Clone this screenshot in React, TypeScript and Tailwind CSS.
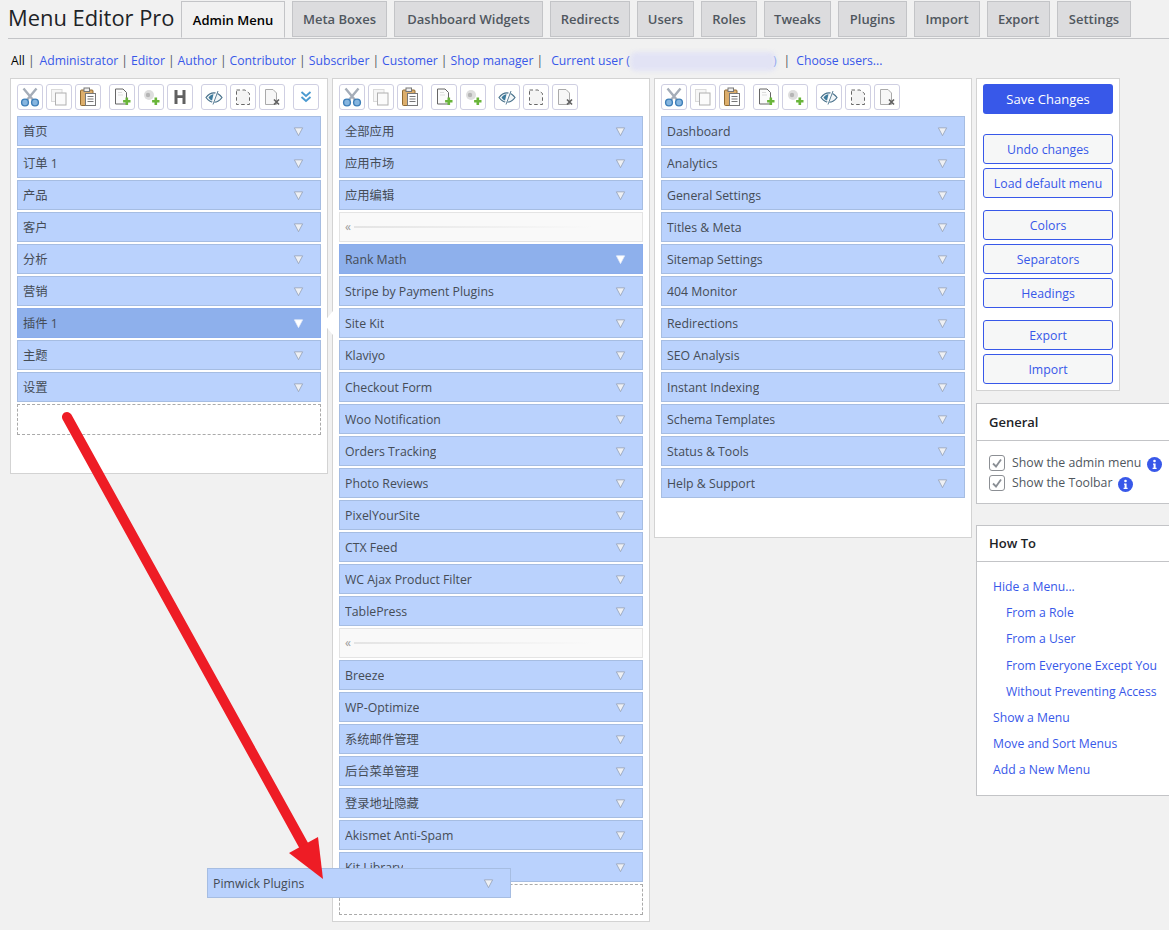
import React from 'react';

const font = "font-['Open_Sans','Noto_Sans_CJK_SC',sans-serif]";

const tabs = [
  { label: 'Admin Menu', w: 'w-[104px]', active: true },
  { label: 'Meta Boxes', w: 'w-[95px]' },
  { label: 'Dashboard Widgets', w: 'w-[149px]' },
  { label: 'Redirects', w: 'w-[80px]' },
  { label: 'Users', w: 'w-[57px]' },
  { label: 'Roles', w: 'w-[56px]' },
  { label: 'Tweaks', w: 'w-[67px]' },
  { label: 'Plugins', w: 'w-[69px]' },
  { label: 'Import', w: 'w-[66px]' },
  { label: 'Export', w: 'w-[63px]' },
  { label: 'Settings', w: 'w-[74px]' },
];

const roles = ['Administrator', 'Editor', 'Author', 'Contributor', 'Subscriber', 'Customer', 'Shop manager'];

const column1 = ['首页', '订单 1', '产品', '客户', '分析', '营销', '插件 1', '主题', '设置'];
const column2 = [
  '全部应用', '应用市场', '应用编辑', '-', 'Rank Math', 'Stripe by Payment Plugins', 'Site Kit', 'Klaviyo',
  'Checkout Form', 'Woo Notification', 'Orders Tracking', 'Photo Reviews', 'PixelYourSite', 'CTX Feed',
  'WC Ajax Product Filter', 'TablePress', '-', 'Breeze', 'WP-Optimize', '系统邮件管理', '后台菜单管理',
  '登录地址隐藏', 'Akismet Anti-Spam', 'Kit Library',
];
const column3 = [
  'Dashboard', 'Analytics', 'General Settings', 'Titles & Meta', 'Sitemap Settings', '404 Monitor', 'Redirections',
  'SEO Analysis', 'Instant Indexing', 'Schema Templates', 'Status & Tools', 'Help & Support',
];

const howTo = [
  { label: 'Hide a Menu...', sub: false },
  { label: 'From a Role', sub: true },
  { label: 'From a User', sub: true },
  { label: 'From Everyone Except You', sub: true },
  { label: 'Without Preventing Access', sub: true },
  { label: 'Show a Menu', sub: false },
  { label: 'Move and Sort Menus', sub: false },
  { label: 'Add a New Menu', sub: false },
];

const GreenPlus = () => (
  <path d="M13.500 10.500h2.600v2.400h2.400v2.600h-2.400v2.400h-2.600v-2.400h-2.400v-2.600h2.400z" fill="#69b53a" />
);

const icons: Record<string, React.ReactNode> = {
  cut: (
    <>
      <path d="M3.500 1.500l10 12M16.500 1.500l-10 12" stroke="#a5adb8" strokeWidth="2.400" fill="none" />
      <circle cx="5" cy="15.500" r="3.400" fill="#86b6e0" stroke="#3f7fb8" strokeWidth="1.400" />
      <circle cx="15" cy="15.500" r="3.400" fill="#86b6e0" stroke="#3f7fb8" strokeWidth="1.400" />
    </>
  ),
  copy: (
    <>
      <rect x="2.500" y="2.500" width="10.500" height="12" fill="#f6f6f6" stroke="#dadada" />
      <rect x="6.500" y="6" width="10.500" height="12" fill="#fbfbfb" stroke="#b0b0b0" />
    </>
  ),
  paste: (
    <>
      <rect x="2.500" y="3" width="12.500" height="15.500" rx="1" fill="#dcae6c" stroke="#8f6a32" />
      <rect x="6" y="1" width="5.500" height="3.500" fill="#eee" stroke="#777" />
      <rect x="7.500" y="6.500" width="10" height="12" fill="#fdfdfd" stroke="#777" />
      <path d="M9.500 9.500h6M9.500 12h6M9.500 14.500h6" stroke="#777" />
    </>
  ),
  add: (
    <>
      <path d="M3.500 2h7.500l3.500 3.500V17h-11z" fill="#fbfbfb" stroke="#666" />
      <path d="M6 5.500h4M6 8h5" stroke="#ddd" />
      <GreenPlus />
    </>
  ),
  addSep: (
    <>
      <circle cx="8" cy="8" r="5" fill="#dedede" />
      <circle cx="7" cy="8" r="2.200" fill="#b5b5b5" />
      <GreenPlus />
    </>
  ),
  heading: <path d="M4.500 3h3v5.300h5V3h3v14h-3v-6h-5v6h-3z" fill="#606060" />,
  hide: (
    <>
      <path d="M2 10.500C4.500 7 7 5.800 10 5.800s5.500 1.200 8 4.700c-2.500 3.500-5 4.700-8 4.700s-5.500-1.200-8-4.700z" fill="#f2f6f8" stroke="#47708a" strokeWidth="1.200" />
      <path d="M4.500 10.500c1.300-1.900 3-3 5-3.200l-1.500 6.200c-1.400-.5-2.500-1.500-3.500-3z" fill="#3c7a9c" />
      <path d="M13.500 3.500l-5 14" stroke="#fff" strokeWidth="2.200" />
      <path d="M14 4l-5 13.500" stroke="#47708a" strokeWidth="0.900" />
    </>
  ),
  dashed: <path d="M3.500 3h8.500l4.500 3.500v11h-13z" fill="#f4f4f4" stroke="#666" strokeDasharray="3.500 2.500" />,
  remove: (
    <>
      <path d="M3.500 2.500h7.500l3.500 3.500v11.500h-11z" fill="#f7f7f7" stroke="#aaa" />
      <path d="M12 12.500l5 5M17 12.500l-5 5" stroke="#606060" strokeWidth="1.700" />
    </>
  ),
  expand: (
    <>
      <path d="M5.500 5l4.500 4 4.500-4" stroke="#4a9ad0" strokeWidth="1.800" fill="none" />
      <path d="M5.500 10l4.500 4 4.500-4" stroke="#4a9ad0" strokeWidth="1.800" fill="none" />
    </>
  ),
};

const ToolButton = ({ name, className = '' }: { name: string; className?: string }) => (
  <div className={`flex h-[26px] w-[26px] items-center justify-center rounded-[3px] border border-[#cfcfe2] bg-white ${className}`}>
    <svg width="20" height="20" viewBox="0 0 20 20">{icons[name]}</svg>
  </div>
);

const Toolbar = ({ heading = false }: { heading?: boolean }) => (
  <div className="flex h-[26px]">
    <div className="flex gap-[3px]">
      <ToolButton name="cut" />
      <ToolButton name="copy" />
      <ToolButton name="paste" />
    </div>
    <div className="ml-2 flex gap-[3px]">
      <ToolButton name="add" />
      <ToolButton name="addSep" />
      {heading && <ToolButton name="heading" />}
    </div>
    <div className="ml-2 flex gap-[3px]">
      <ToolButton name="hide" />
      <ToolButton name="dashed" />
      <ToolButton name="remove" />
    </div>
    {heading && <ToolButton name="expand" className="ml-2" />}
  </div>
);

const Arrow = ({ active = false }: { active?: boolean }) => (
  <svg width="11" height="11" viewBox="0 0 12 12" className="mr-[6px] shrink-0">
    <path d="M1.500 2h9L6 10.500z" fill={active ? '#ffffff' : '#eef0f4'} stroke={active ? '#e8edf8' : '#8f9bb0'} strokeWidth="0.800" />
  </svg>
);

const MenuItem = ({ label, active = false, className = '' }: { label: string; active?: boolean; className?: string }) => (
  <div
    className={`flex h-[30px] w-[304px] items-center justify-between border pl-[5px] pr-[10px] text-[12.300px] text-[#454c56] ${
      active ? 'border-[#8aaceb] bg-[#8eb0ec]' : 'border-[#a6bde2] bg-[#bad2fd]'
    } ${className}`}
  >
    <span className="mt-[2px] overflow-hidden whitespace-nowrap">{label}</span>
    <Arrow active={active} />
  </div>
);

const Separator = () => (
  <div className="flex h-[30px] w-[304px] items-center border border-[#e4e4e4] bg-[#f9f9f9] pl-[5px] pr-[50px]">
    <span className="text-[12px] leading-none text-[#999999]">«</span>
    <div className="ml-[3px] h-[2px] flex-1 bg-gradient-to-r from-[#e4e4e4] to-[#f9f9f9]" />
  </div>
);

const MenuColumn = ({
  items,
  active,
  heading = false,
  dropZone = false,
  className = '',
  children,
}: {
  items: string[];
  active?: string;
  heading?: boolean;
  dropZone?: boolean;
  className?: string;
  children?: React.ReactNode;
}) => (
  <div className={`relative w-[318px] border border-[#d3d3d3] bg-white px-[6px] pt-[5px] ${className}`}>
    <Toolbar heading={heading} />
    <div className="mt-[6px] flex flex-col gap-[2px]">
      {items.map((item, i) =>
        item === '-' ? <Separator key={i} /> : <MenuItem key={i} label={item} active={item === active} />
      )}
      {dropZone && <div className="h-[31px] w-[304px] border border-dashed border-[#aaaaaa] bg-white" />}
    </div>
    {children}
  </div>
);

const OutlineButton = ({ label, className = '' }: { label: string; className?: string }) => (
  <div className={`flex h-[30px] w-[130px] items-center justify-center rounded-[3px] border border-[#3858e9] bg-[#f6f7f7] pt-[2px] text-[12.300px] text-[#3858e9] ${className}`}>
    {label}
  </div>
);

const InfoIcon = () => (
  <svg width="15" height="15" viewBox="0 0 15 15" className="ml-[6px] mt-[2px] shrink-0">
    <circle cx="7.500" cy="7.500" r="7.500" fill="#3858e9" />
    <circle cx="7.500" cy="4" r="1.300" fill="#fff" />
    <path d="M6 6.500h2.600v4.300h1v1.200H5.600v-1.200h1V7.700H6z" fill="#fff" />
  </svg>
);

const CheckRow = ({ label }: { label: string }) => (
  <div className="flex h-5 items-center text-[12.300px] text-[#50575e]">
    <div className="mr-[7px] flex h-4 w-4 shrink-0 items-center justify-center rounded-[3px] border border-[#8c8f94] bg-white">
      <svg width="12" height="12" viewBox="0 0 12 12">
        <path d="M2 6.500l3 3 5-7" stroke="#8a8f95" strokeWidth="1.800" fill="none" />
      </svg>
    </div>
    <span>{label}</span>
    <InfoIcon />
  </div>
);

export default function App() {
  return (
    <div className={`relative h-[930px] w-[1169px] overflow-hidden bg-[#f1f1f1] ${font}`}>
      {/* Title and tabs */}
      <div className="ml-2 flex h-[39px] items-end border-b border-[#c3c4c7]">
        <h1 className="mb-[3px] w-[173px] whitespace-nowrap text-[21.900px] leading-[34px] text-[#1d2327]">Menu Editor Pro</h1>
        <div className="flex h-[37px] gap-[7px]">
          {tabs.map((tab) => (
            <div
              key={tab.label}
              className={`flex items-center justify-center border border-[#c3c4c7] pt-[2px] text-[13px] font-semibold ${tab.w} ${
                tab.active ? 'h-[37px] border-b-[#f1f1f1] bg-[#f1f1f1] text-[#000000]' : 'h-[36px] bg-[#dcdcde] text-[#50575e]'
              }`}
            >
              {tab.label}
            </div>
          ))}
        </div>
      </div>

      {/* Role filter */}
      <div className="ml-[11px] mt-[12px] flex h-[19px] items-center whitespace-nowrap pt-[2px] text-[12.200px] text-[#3858e9]">
        <span className="text-[#000000]">All</span>
        <span className="ml-[3px] mr-[5px] text-[#50575e]">|</span>
        {roles.map((role) => (
          <React.Fragment key={role}>
            <span>{role}</span>
            <span className="mx-[3px] text-[#50575e]">|</span>
          </React.Fragment>
        ))}
        <span className="ml-[5px]">Current user (</span>
        <div className="h-[19px] w-[146px] rounded-[6px] bg-[#e2e3f5] blur-[2px]" />
        <span className="ml-[-3px]">)</span>
        <span className="ml-[7px] mr-[6px] text-[#50575e]">|</span>
        <span>Choose users...</span>
      </div>

      {/* Columns */}
      <div className="ml-[10px] mt-[8px] flex items-start gap-[4px]">
        <MenuColumn items={column1} active="插件 1" heading dropZone className="h-[396px]" />

        <MenuColumn items={column2} active="Rank Math" dropZone className="h-[844px]">
          <div className="absolute left-[-10px] top-[232px] h-0 w-0 border-y-[12px] border-r-[10px] border-y-transparent border-r-white" />
        </MenuColumn>

        <MenuColumn items={column3} className="h-[460px]" />

        <div className="flex w-[200px] shrink-0 flex-col">
          <div className="w-[144px] border border-[#d3d3d3] bg-white px-[6px] pb-[6px] pt-[5px]">
            <div className="flex h-[30px] w-[130px] items-center justify-center rounded-[3px] bg-[#3858e9] pt-[2px] text-[13px] text-white">
              Save Changes
            </div>
            <OutlineButton label="Undo changes" className="mt-5" />
            <OutlineButton label="Load default menu" className="mt-1" />
            <OutlineButton label="Colors" className="mt-3" />
            <OutlineButton label="Separators" className="mt-1" />
            <OutlineButton label="Headings" className="mt-1" />
            <OutlineButton label="Export" className="mt-3" />
            <OutlineButton label="Import" className="mt-1" />
          </div>

          <div className="mt-3 h-[101px] border border-[#c3c4c7] bg-white">
            <div className="flex h-[37px] items-center border-b border-[#c3c4c7] pl-3 pt-[2px] text-[13px] font-semibold text-[#1d2327]">
              General
            </div>
            <div className="pl-3 pt-[12px]">
              <CheckRow label="Show the admin menu" />
              <CheckRow label="Show the Toolbar" />
            </div>
          </div>

          <div className="mt-[21px] h-[271px] border border-[#c3c4c7] bg-white">
            <div className="flex h-[36px] items-center border-b border-[#c3c4c7] pl-3 text-[13px] font-semibold text-[#1d2327]">
              How To
            </div>
            <div className="flex flex-col pl-4 pt-[12px]">
              {howTo.map((link) => (
                <div key={link.label} className={`h-[26.200px] whitespace-nowrap text-[12.200px] leading-[26px] text-[#3858e9] ${link.sub ? 'pl-[13px]' : ''}`}>
                  {link.label}
                </div>
              ))}
            </div>
          </div>
        </div>
      </div>

      {/* Item being dragged */}
      <MenuItem label="Pimwick Plugins" className="absolute left-[207px] top-[868px]" />

      {/* Red annotation arrow */}
      <svg width="1169" height="930" viewBox="0 0 1169 930" className="pointer-events-none absolute left-0 top-0">
        <path d="M67 417L304 846" stroke="#ee1c25" strokeWidth="10" strokeLinecap="round" fill="none" />
        <path d="M323 879L289 853L318 837z" fill="#ee1c25" />
      </svg>
    </div>
  );
}
